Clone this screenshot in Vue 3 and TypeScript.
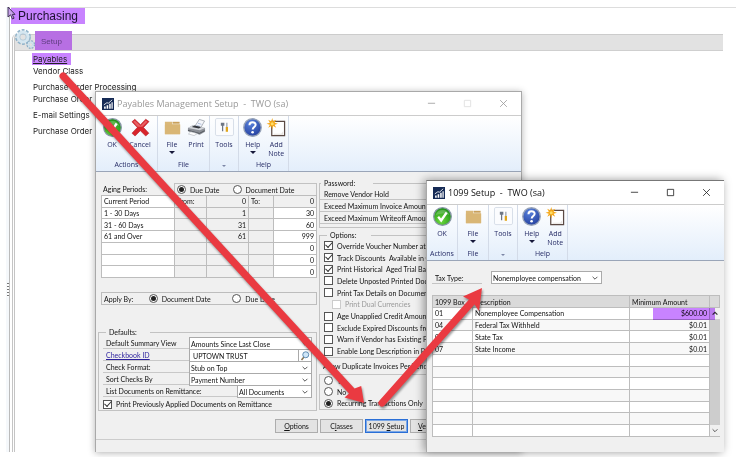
<script setup lang="ts">
import { h, ref } from 'vue'

interface Tool { icon: string; label: string; second?: string; drop?: boolean }
interface Group { name: string; cls: string; tools: Tool[] }

const icons: Record<string, string> = {
  ok: '<defs><radialGradient id="okg" cx=".4" cy=".75" r=".8"><stop offset="0" stop-color="#6edb3c"/><stop offset="1" stop-color="#178a14"/></radialGradient></defs><circle cx="10" cy="10" r="9.3" fill="url(#okg)" stroke="#8796a6" stroke-width="1.3"/><path d="M3 8.5a7.3 7.3 0 0 1 14 0q-7-3.500-14 0z" fill="#fff" opacity=".22"/><path d="M5.400 10.200l3.200 4 5.800-8.400" fill="none" stroke="#fff" stroke-width="2.400"/>',
  cancel: '<path d="M1 4l3-2.600 6 5.600 5.500-5.800L19 3.800 13.200 10l5.600 6-3.300 3-5.700-5.700L4.300 19 1 16l5.600-6z" fill="#d8242b" stroke="#b0262c" stroke-width=".6"/><path d="M2.300 4l1.700-1.500 6 5.600 5.500-5.600 1.800 1.500-5.300 5.200H7z" fill="#f0797c" opacity=".7"/>',
  file: '<path d="M2 4h7.500V6.500H18V17H2z" fill="#dab878"/><path d="M10 4h7.500v2H10z" fill="#c9a05a"/><path d="M2 7h16v10H2z" fill="#d9b675"/>',
  print: '<path d="M8 9l5-7.500 5.500 1.700-4 7z" fill="#f4f6fa" stroke="#8b919b" stroke-width=".7"/><path d="M10 7.700l3.600 1.100M11.500 5.500l3.700 1.200" stroke="#8aa2cf" stroke-width=".7"/><path d="M1 10.500l5-3 13 3v4l-5.500 3L1 14z" fill="#8c9097"/><path d="M1 10.500l5-3 13 3-5.500 2.500z" fill="#d2d5da"/><path d="M5 9.500l3-1.600 7 1.700-2.500 1.500z" fill="#33373d"/><path d="M1 13l12 3.200 5.500-2.800" fill="none" stroke="#494d54" stroke-width=".9"/><path d="M4 14.500l7 1.800-3.500 2.200-6-1.700z" fill="#fff" stroke="#a9adb5" stroke-width=".6"/>',
  tools: '<rect x=".5" y=".5" width="19" height="18" rx="1.500" fill="#fbfcfe" stroke="#d6dde8"/><path d="M8 5v9M6.800 5v2.500h2.400V5" fill="none" stroke="#6d7685" stroke-width="1.300"/><path d="M12.500 5v5" stroke="#7b8492" stroke-width="1"/><path d="M12.500 9.500v5" stroke="#e0a51b" stroke-width="2.400"/>',
  help: '<defs><radialGradient id="hg" cx=".4" cy=".25" r=".9"><stop offset="0" stop-color="#5a83dc"/><stop offset="1" stop-color="#1b3595"/></radialGradient></defs><circle cx="10" cy="10" r="9.200" fill="url(#hg)" stroke="#97a3b8" stroke-width="1.400"/><path d="M6.800 7.500c0-4 6.500-4 6.500-.4 0 2.300-3.100 2.300-3.100 4.900" fill="none" stroke="#fff" stroke-width="2.100"/><circle cx="10.100" cy="15" r="1.400" fill="#fff"/>',
  note: '<path d="M5 3.500h13.500V18.500H5z" fill="#fff" stroke="#5b4a44" stroke-width="1.300"/><path d="M7 16.500h8l2-2.500V17.500H7z" fill="#e7e3e0"/><path d="M5.500 0l1 3.500 3.200-1.700-1.700 3.200 3.500 1-3.500 1 1.700 3.200-3.200-1.700-1 3.500-1-3.500-3.200 1.700L3 7-.5 6 3 5 1.300 1.800l3.200 1.700z" fill="#f5a81c"/><circle cx="5.500" cy="6" r="1.600" fill="#ffdd66"/>',
  app: '<rect width="20" height="20" fill="#152a55"/><path d="M3.500 14h2.700v4H3.500zM7.700 12h2.700v6H7.700zM12 9.500h2.500V18H12zM15.800 7h2V18h-2z" fill="#fff"/><path d="M3 11.500L8 8l3 .5 6-5.500" fill="none" stroke="#fff" stroke-width="1.400"/>',
  gear: '<g fill="none"><circle cx="8" cy="8" r="5.700" stroke="#8fb2c9" stroke-width="4.400" stroke-dasharray="2.400 1.180"/><circle cx="8" cy="8" r="4.800" stroke="#d5e6f0" stroke-width="3.400"/><circle cx="8" cy="8" r="3.200" stroke="#9dbace" stroke-width=".6"/><circle cx="15.700" cy="15.500" r="3" stroke="#86aac3" stroke-width="2.800" stroke-dasharray="1.500 .860"/><circle cx="15.700" cy="15.500" r="2.400" stroke="#cfe2ed" stroke-width="1.600"/></g>',
  down: '<path d="M4 7l6 6 6-6" fill="none" stroke="#444" stroke-width="2.200"/>',
  up: '<path d="M4 13l6-6 6 6" fill="none" stroke="#333" stroke-width="3"/>',
  lens: '<path d="M3 18l5-6" stroke="#8a7450" stroke-width="3"/><circle cx="11.500" cy="7.500" r="6" fill="#cfe6f7" stroke="#4d7da8" stroke-width="1.700"/>',
  min: '<path d="M2 9.500h16" stroke="currentColor" stroke-width="1.800"/>',
  max: '<path d="M3 3h14v14H3z" fill="none" stroke="currentColor" stroke-width="1.800"/>',
  close: '<path d="M2.500 2.500l15 15M17.500 2.500l-15 15" stroke="currentColor" stroke-width="1.800"/>',
}
const Icon = (props: { name: string }) =>
  h('svg', { viewBox: '0 0 20 20', 'aria-hidden': 'true', innerHTML: icons[props.name] })
Icon.props = ['name']

const captions = [
  { icon: 'min', label: 'Minimize' },
  { icon: 'max', label: 'Maximize' },
  { icon: 'close', label: 'Close' },
]

const ok: Tool = { icon: 'ok', label: 'OK' }
const common: Group[] = [
  { name: '', cls: 'tools', tools: [{ icon: 'tools', label: 'Tools' }] },
  { name: 'Help', cls: 'help', tools: [{ icon: 'help', label: 'Help', drop: true }, { icon: 'note', label: 'Add', second: 'Note' }] },
]
const file: Tool = { icon: 'file', label: 'File', drop: true }
const mainRibbon: Group[] = [
  { name: 'Actions', cls: 'wide', tools: [ok, { icon: 'cancel', label: 'Cancel' }] },
  { name: 'File', cls: 'pair', tools: [file, { icon: 'print', label: 'Print' }] },
  ...common,
]
const subRibbon: Group[] = [
  { name: 'Actions', cls: 'single', tools: [ok] },
  { name: 'File', cls: 'single', tools: [file] },
  ...common,
]

const links = [
  { text: 'Payables', cls: 'marked' },
  { text: 'Vendor Class', cls: '' },
  { text: 'Purchase Order Processing', cls: 'spaced' },
  { text: 'Purchase Order C', cls: '' },
  { text: 'E-mail Settings', cls: 'spaced' },
  { text: 'Purchase Order E', cls: 'spaced' },
]

const agingBy = ref('due')
const applyBy = ref('doc')
const duplicates = ref('recurring')
const periods = [
  ['Current Period', 'From:', '0', 'To:', '0'],
  ['1 - 30 Days', '', '1', '', '30'],
  ['31 - 60 Days', '', '31', '', '60'],
  ['61 and Over', '', '61', '', '999'],
  ['', '', '', '', '0'],
  ['', '', '', '', '0'],
  ['', '', '', '', '0'],
]
const passwords = ['Remove Vendor Hold', 'Exceed Maximum Invoice Amount', 'Exceed Maximum Writeoff Amount']
const options = ref([
  { text: 'Override Voucher Number at Tr', on: true },
  { text: 'Track Discounts  Available in G', on: true },
  { text: 'Print Historical  Aged Trial Balan', on: true },
  { text: 'Delete Unposted Printed Docum', on: false },
  { text: 'Print Tax Details on Documents', on: false },
  { text: 'Print Dual Currencies', on: false, disabled: true },
  { text: 'Age Unapplied Credit Amounts', on: false },
  { text: 'Exclude Expired Discounts from', on: false },
  { text: 'Warn if Vendor has Existing Pu', on: false },
  { text: 'Enable Long Description in Pay', on: false },
])
const printApplied = ref(true)
const checkbook = ref('UPTOWN TRUST')

const boxes = [
  ['01', 'Nonemployee Compensation', '$600.00'],
  ['04', 'Federal Tax Withheld', '$0.01'],
  ['06', 'State Tax', '$0.01'],
  ['07', 'State Income', '$0.01'],
  ...Array.from({ length: 7 }, () => ['', '', '']),
]
</script>

<template>
  <main class="desktop">
    <div class="rail"><span class="grip"></span></div>
    <section class="pane">
      <h1><span>Purchasing</span></h1>
      <div class="area">
        <header class="tab"><Icon name="gear" class="gear" /><h2>Setup</h2></header>
        <ul class="links">
          <li v-for="l in links" :key="l.text" :class="l.cls"><a href="#">{{ l.text }}</a></li>
        </ul>
      </div>
    </section>
    <svg class="cursor" viewBox="0 0 9 15" aria-hidden="true"><path d="M1 1v10l2.500-2.200L5.500 13l1.600-.8-1.900-3.800H8z" fill="#c9a3ea" stroke="#43345a" /></svg>

    <section class="window main" aria-label="Payables Management Setup">
      <header class="titlebar inactive">
        <Icon name="app" class="app" /><span class="title">Payables Management Setup &nbsp;-&nbsp; TWO (sa)</span>
        <button v-for="c in captions" :key="c.icon" :class="['cap', c.icon]" :aria-label="c.label"><Icon :name="c.icon" /></button>
      </header>
      <nav class="ribbon">
        <div v-for="g in mainRibbon" :key="g.cls" :class="['group', g.cls]">
          <div class="set">
            <button v-for="t in g.tools" :key="t.label" class="tool">
              <Icon :name="t.icon" class="big" /><span>{{ t.label }}</span>
              <span v-if="t.second">{{ t.second }}</span><i v-if="t.drop" class="tri"></i>
            </button>
          </div>
          <div class="gname">{{ g.name }}<i v-if="!g.name" class="tri small"></i></div>
        </div>
      </nav>
      <div class="body">
        <div class="cols">
          <div class="left">
            <div class="aging-head">
              <span class="lead">Aging Periods:</span>
              <div class="choice">
                <label><input v-model="agingBy" type="radio" name="aging" value="due" />Due Date</label>
                <label><input v-model="agingBy" type="radio" name="aging" value="doc" />Document Date</label>
              </div>
            </div>
            <table class="aging">
              <colgroup><col class="c1" /><col class="c2" /><col class="c3" /><col class="c4" /><col /></colgroup>
              <tbody>
                <tr v-for="(p, i) in periods" :key="i"><td v-for="(c, j) in p" :key="j">{{ c }}</td></tr>
              </tbody>
            </table>
            <div class="apply">
              <span>Apply By:</span>
              <label><input v-model="applyBy" type="radio" name="apply" value="doc" />Document Date</label>
              <label><input v-model="applyBy" type="radio" name="apply" value="due" />Due Date</label>
            </div>
            <fieldset class="defaults">
              <legend>Defaults:</legend>
              <div class="field">
                <label for="summary">Default Summary View</label>
                <div class="pick"><select id="summary"><option>Amounts Since Last Close</option></select><Icon name="down" /></div>
              </div>
              <div class="field">
                <label for="checkbook"><a href="#">Checkbook ID</a></label>
                <div class="pick lookup"><input id="checkbook" v-model="checkbook" type="text" /><Icon name="lens" /></div>
              </div>
              <div class="field">
                <label for="format">Check Format:</label>
                <div class="pick"><select id="format"><option>Stub on Top</option></select><Icon name="down" /></div>
              </div>
              <div class="field">
                <label for="sort">Sort Checks By</label>
                <div class="pick"><select id="sort"><option>Payment Number</option></select><Icon name="down" /></div>
              </div>
              <div class="field long">
                <label for="remit">List Documents on Remittance:</label>
                <div class="pick"><select id="remit"><option>All Documents</option></select><Icon name="down" /></div>
              </div>
              <label class="tick"><input v-model="printApplied" type="checkbox" />Print Previously Applied Documents on Remittance</label>
            </fieldset>
          </div>
          <div class="right">
            <fieldset class="passwords">
              <legend>Password:</legend>
              <div v-for="p in passwords" :key="p" class="line">{{ p }}</div>
            </fieldset>
            <fieldset class="options">
              <legend>Options:</legend>
              <label v-for="o in options" :key="o.text" :class="['tick', { off: o.disabled }]">
                <input v-model="o.on" type="checkbox" :disabled="o.disabled" />{{ o.text }}
              </label>
            </fieldset>
            <div id="dup" class="dup-title">Allow Duplicate Invoices Per Vendor</div>
            <div class="dup" role="radiogroup" aria-labelledby="dup">
              <label><input v-model="duplicates" type="radio" name="dup" value="yes" />Yes</label>
              <label><input v-model="duplicates" type="radio" name="dup" value="no" />No</label>
              <label><input v-model="duplicates" type="radio" name="dup" value="recurring" />Recurring Transactions Only</label>
            </div>
          </div>
        </div>
        <footer class="actions">
          <button><u>O</u>ptions</button>
          <button>C<u>l</u>asses</button>
          <button class="focus">1099 <u>S</u>etup</button>
          <button class="last"><u>V</u>e</button>
        </footer>
      </div>
    </section>

    <section class="window sub" aria-label="1099 Setup">
      <header class="titlebar">
        <Icon name="app" class="app" /><span class="title">1099 Setup &nbsp;-&nbsp; TWO (sa)</span>
        <button v-for="c in captions" :key="c.icon" :class="['cap', c.icon]" :aria-label="c.label"><Icon :name="c.icon" /></button>
      </header>
      <nav class="ribbon">
        <div v-for="(g, i) in subRibbon" :key="i" :class="['group', g.cls]">
          <div class="set">
            <button v-for="t in g.tools" :key="t.label" class="tool">
              <Icon :name="t.icon" class="big" /><span>{{ t.label }}</span>
              <span v-if="t.second">{{ t.second }}</span><i v-if="t.drop" class="tri"></i>
            </button>
          </div>
          <div class="gname">{{ g.name }}<i v-if="!g.name" class="tri small"></i></div>
        </div>
      </nav>
      <div class="body">
        <div class="tax">
          <label for="tax">Tax Type:</label>
          <div class="pick"><select id="tax"><option>Nonemployee compensation</option></select><Icon name="down" /></div>
        </div>
        <div class="grid">
          <table class="boxes">
            <colgroup><col class="b1" /><col /><col class="b3" /></colgroup>
            <thead><tr><th>1099 Box</th><th>Description</th><th>Minimum Amount</th></tr></thead>
            <tbody>
              <tr v-for="(b, i) in boxes" :key="i"><td v-for="(c, j) in b" :key="j">{{ c }}</td></tr>
            </tbody>
          </table>
          <div class="scroll"><span class="cornerhead"></span><Icon name="up" /><span class="thumb"></span><Icon name="down" /></div>
          <span class="highlight"></span>
        </div>
      </div>
    </section>

    <svg class="arrows" viewBox="0 0 736 457" aria-hidden="true">
      <g fill="#ea3a41">
        <path d="M60.500 78.500a3.600 3.600 0 0 1 5.200-5L354.500 388.500l6.700-2.500L364 403l-19.500-5.500 4.500-4z" />
        <path d="M379.500 400.500a3.500 3.500 0 0 0 5 5L474.500 304.500l4.500 6.500 3-23-19 8.500 6 3z" />
      </g>
    </svg>
  </main>
</template>

<style>
body { background: #fff; }
</style>

<style scoped>
* { box-sizing: border-box; }
.desktop { position: relative; min-height: 100vh; padding: 7px 0 5px 6px; display: flex; overflow: hidden; font: 7px/10px Lato, "Liberation Sans", sans-serif; color: #111; }
.desktop button, .desktop input, .desktop select { font: inherit; color: inherit; margin: 0; border-radius: 0; }
.rail { width: 4px; margin-right: 1px; border-right: 1px solid #bbb; background: #f5f8fb; display: grid; align-items: center; }
.grip { width: 2px; height: 14px; margin: 120px 0 0 1px; background: repeating-linear-gradient(#777 0 1px, #fff 1px 3px); }
.pane { flex: 1; min-width: 0; border-top: 1px solid #ddd; display: flex; flex-direction: column; }
h1 { margin: 0; font: 12px/16px "Liberation Sans", sans-serif; color: #1c1030; }
h1 span { display: inline-block; width: 74px; padding-left: 7px; background: #c883ff; }
.area { flex: 1; margin: 10px 13px 0 1px; border-left: 3px double #c4c4c4; border-radius: 5px 0 0 0; }
.tab { display: flex; height: 17px; background: #e2e2e2; border-top: 1px solid #ccc; border-bottom: 1px solid #cfcfcf; border-radius: 4px 0 0 0; }
.gear { width: 20px; height: 20px; margin: -6px 0 0 0; position: relative; }
h2 { margin: -4px 0 0 0; width: 37px; height: 19px; padding-left: 6px; background: #b76fe3; color: #5f3d80; font: 8px/22px "Liberation Sans", sans-serif; }
.links { list-style: none; margin: 0; padding: 2px 0 0 18px; font: 8px/12px Inter, "Liberation Sans", sans-serif; }
.links a { color: #222; text-decoration: none; }
.links .spaced { margin-top: 4px; }
.links .marked { width: 39px; background: #c883ff; margin-left: -1px; padding-left: 1px; }
.links .marked a { text-decoration: underline; }
.cursor { position: absolute; left: 7px; top: 6px; width: 9px; height: 15px; }

.window { position: absolute; bottom: 5px; display: flex; flex-direction: column; background: #f0f0f0; border: 1px solid #a9a9a9; border-bottom: 0; }
.main { left: 95px; top: 91px; width: 427px; box-shadow: 0 1px 7px rgba(0, 0, 0, .3); }
.sub { left: 426px; top: 180px; width: 298px; box-shadow: -2px 0 9px rgba(0, 0, 0, .4); border-right: 0; border-top-color: #777; }
.titlebar { height: 24px; display: flex; align-items: center; background: #fff; color: #111; border-bottom: 1px solid #ccc; padding: 0 0 0 6px; font: 9px/12px "Open Sans", "Noto Sans", sans-serif; }
.titlebar .app { width: 12px; height: 12px; margin-right: 3px; }
.title { flex: 1; white-space: nowrap; }
.inactive { color: #999; }
.cap { width: 36px; height: 22px; padding: 0; border: 0; background: none; display: grid; place-items: center; }
.cap svg { width: 9px; height: 9px; color: #222; }
.inactive .cap svg { color: #999; }
.inactive .max svg { color: #ddd; }

.ribbon { height: 56px; display: flex; background: linear-gradient(#fff, #e3eefb); border-bottom: 1px solid #9aa5b8; font: 7px/9px "Open Sans", "Noto Sans", sans-serif; color: #262c66; }
.group { display: flex; flex-direction: column; border-right: 1px solid #d3dbe8; padding-top: 2px; }
.wide { width: 62px; }
.wide .tool { width: 28px; }
.pair { width: 52px; }
.single { width: 31px; }
.tools { width: 29px; }
.help { width: 50px; }
.set { flex: 1; display: flex; padding-left: 2px; }
.single .set, .tools .set { padding: 0; justify-content: center; }
.tool { width: 24px; padding: 0; border: 0; background: none; display: flex; flex-direction: column; align-items: center; white-space: nowrap; }
.tool .big { width: 19px; height: 19px; margin-bottom: 3px; flex: none; overflow: visible; }
.gname { height: 12px; line-height: 11px; text-align: center; }
.tri { width: 0; height: 0; margin-top: 2px; border: 3px solid transparent; border-top: 3px solid #16183a; border-bottom: 0; }
.tri.small { display: inline-block; border-width: 2px 2px 0; border-top-color: #7c86a6; margin: 5px 0 0; }

.body { flex: 1; min-height: 0; display: flex; flex-direction: column; }
.cols { display: grid; grid-template-columns: 219px 1fr; gap: 2px; padding-left: 2px; }
.left { padding-top: 11px; }
.aging-head { display: flex; margin-left: 3px; height: 12px; }
.lead { width: 73px; padding: 1px 2px 0; }
label { white-space: pre; }
.choice { flex: 1; display: flex; gap: 13px; border: 1px solid #c2c2c2; border-bottom: 0; padding-left: 2px; }
.choice label, .apply label, .dup label, .tick { display: flex; align-items: center; gap: 4px; }
input[type="radio"], input[type="checkbox"] { appearance: none; width: 9px; height: 9px; flex: none; border: 1px solid #555; background: #fff; display: grid; place-items: center; }
.desktop input[type="radio"] { border-radius: 50%; }
input[type="radio"]:checked::before { content: ""; width: 5px; height: 5px; border-radius: 50%; background: #222; }
input[type="checkbox"]:checked::before { content: ""; width: 3px; height: 6px; border: solid #333; border-width: 0 1px 1px 0; transform: rotate(42deg) translate(-1px, -1px); }
table { border-collapse: collapse; table-layout: fixed; }
.aging { width: 216px; height: 83px; margin-left: 3px; }
.c1 { width: 73px; } .c2 { width: 32px; } .c3 { width: 42px; } .c4 { width: 25px; }
td, th { padding: 0 2px; border: 1px solid #bdbdbd; font-weight: normal; text-align: left; line-height: 10px; white-space: nowrap; overflow: hidden; }
.aging td { height: 11px; }
.aging td:first-child, .aging td:last-child { background: #fff; }
.aging tr:first-child td:last-child { background: #f0f0f0; }
.aging td:nth-child(3), .aging td:last-child { text-align: right; }
.apply { display: flex; align-items: center; height: 13px; margin: 14px 0 0 3px; border: 1px solid #bdbdbd; padding-left: 2px; }
.apply span { width: 47px; }
.apply label { width: 88px; }
fieldset { margin: 0; min-width: 0; border: 1px solid #c2c2c2; padding: 0; }
legend { width: 44px; padding: 0 3px; margin-left: 3px; line-height: 10px; }
.defaults { margin-top: 22px; padding: 0 4px 0 4px; }
.field { height: 12px; display: grid; grid-template-columns: 86px 1fr; }
.long { grid-template-columns: 134px 1fr; }
.field > label { padding: 1px 3px 0; border-bottom: 1px solid #c8c8c8; }
.field a { color: #2a1f9d; }
.pick { display: grid; grid-template-columns: 1fr 12px; align-items: center; border: 1px solid #aaa; background: #fff; min-width: 0; }
.field .pick { margin-bottom: -1px; }
.pick select { grid-area: 1 / 1 / 2 / 3; appearance: none; border: 0; background: none; padding: 0 1px; height: 11px; min-width: 0; }
.pick input { border: 0; background: none; padding: 0 3px; height: 11px; min-width: 0; border-right: 1px solid #aaa; }
.pick svg { grid-area: 1 / 2; width: 8px; height: 8px; justify-self: center; pointer-events: none; }
.lookup svg { width: 10px; height: 10px; }
.defaults .tick { height: 12px; margin-top: 1px; }
.right { padding-top: 6px; }
.passwords { padding: 0 0 3px; }
.passwords legend { width: 52px; margin-left: 1px; }
.line { height: 12px; padding: 1px 0 0 4px; border-bottom: 1px solid #c4c4c4; white-space: nowrap; }
.options { margin-top: 2px; padding-left: 4px; height: 128px; display: grid; grid-auto-rows: 1fr; }
.options .off { margin-left: 8px; color: #999; }
.off input { border-color: #ccc; }
.dup-title { line-height: 16px; padding-left: 4px; white-space: nowrap; height: 16px; }
.dup { height: 36px; border: 1px solid #c4c4c4; padding-left: 4px; display: grid; grid-auto-rows: 1fr; }
.actions { display: flex; gap: 2px; padding: 8px 0 6px 179px; border-bottom: 1px solid #ccc; }
.actions button { width: 43px; height: 14px; padding: 0; border: 1px solid #adadad; background: #e3e3e3; }
.actions .focus { border: 1px solid #2a6fd6; outline: 1px solid #7ba7e6; outline-offset: -2px; }
.actions .last { text-align: left; padding-left: 7px; }

.sub .body { padding: 10px 4px 0 5px; }
.tax { display: grid; grid-template-columns: 50px 111px; column-gap: 9px; height: 13px; }
.tax label { padding: 2px 3px 0; border-bottom: 1px solid #c4c4c4; }
.grid { position: relative; display: flex; margin-top: 11px; }
.boxes { flex: 1; height: 142px; background: #fff; }
.b1 { width: 40px; } .b3 { width: 80px; }
.boxes th { background: #dadada; height: 12px; }
.boxes td { height: 11px; }
.boxes tr:nth-child(even) td { background: #f8f8f8; }
.boxes td:last-child { text-align: right; }
.scroll { width: 10px; display: flex; flex-direction: column; align-items: center; background: #f0f0f0; border-bottom: 1px solid #bdbdbd; }
.cornerhead { align-self: stretch; height: 13px; background: #dadada; border: 1px solid #bdbdbd; border-left: 0; }
.scroll svg { width: 8px; height: 11px; }
.thumb { flex: 1; align-self: stretch; background: #cdcdcd; }
.highlight { position: absolute; top: 13px; right: 5px; width: 62px; height: 12px; background: #c883ff; mix-blend-mode: multiply; }

.arrows { position: absolute; left: 0; top: 0; width: 736px; height: 457px; pointer-events: none; filter: drop-shadow(1px 2px 1px rgba(0, 0, 0, .4)); }
</style>
